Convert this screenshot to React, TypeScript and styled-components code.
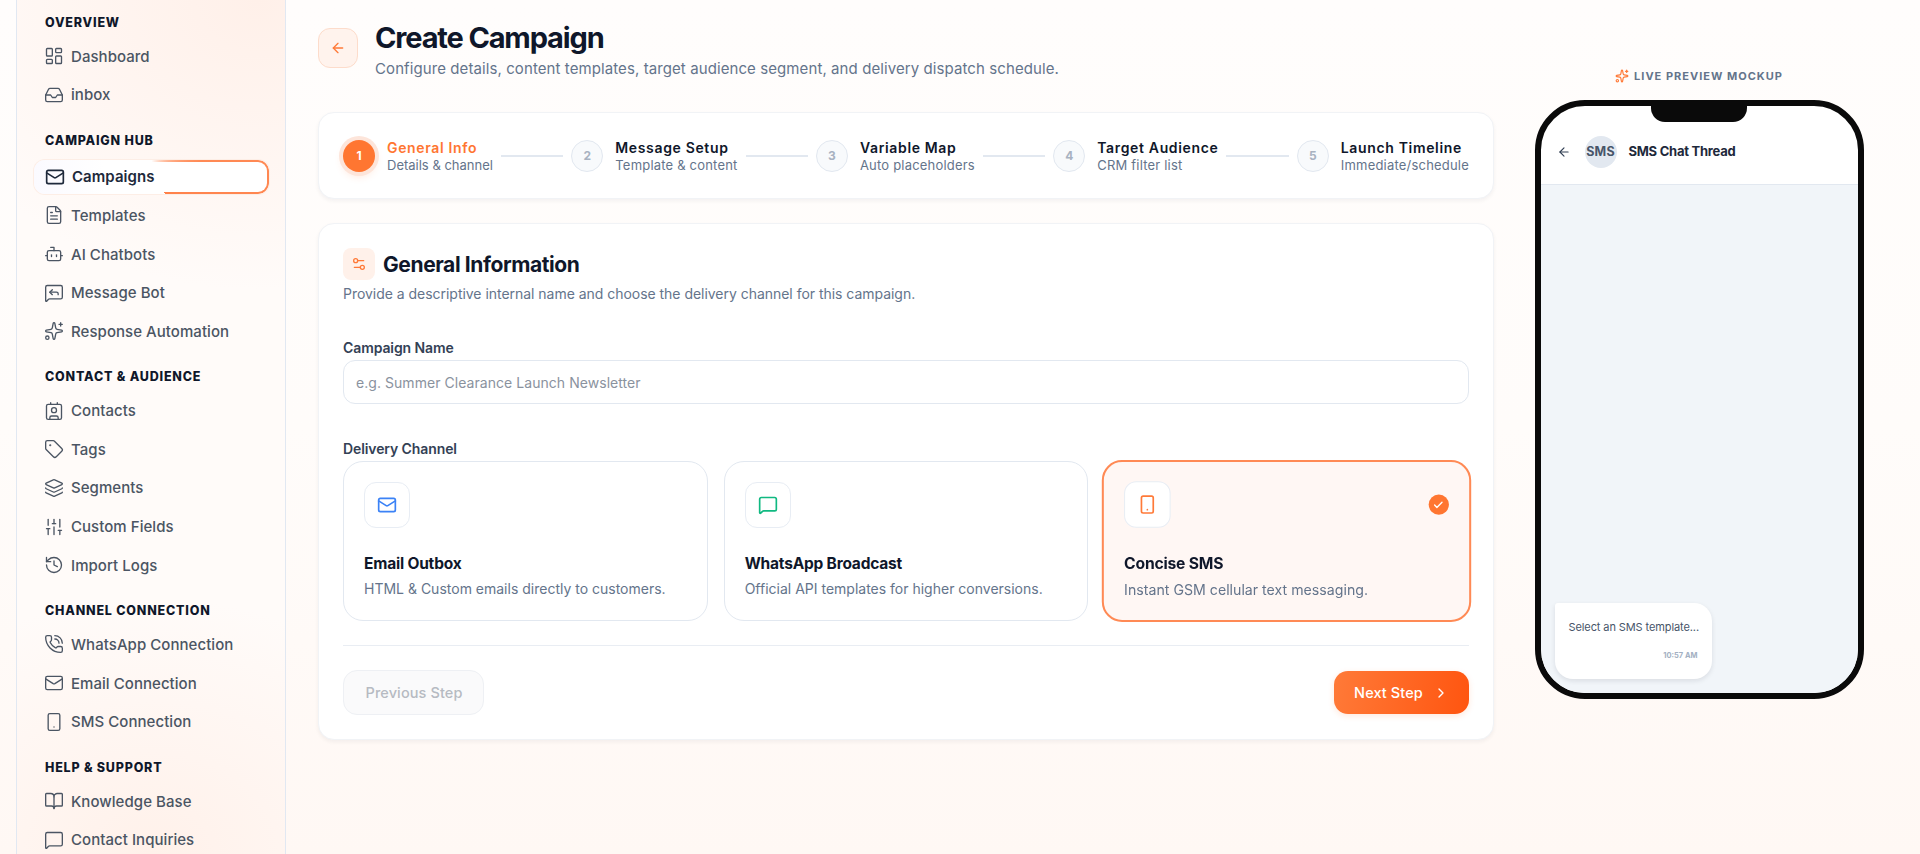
import React from "react";
import styled, { createGlobalStyle } from "styled-components";
import {
  ArrowLeft,
  Bot,
  BookOpen,
  Check,
  ChevronRight,
  Contact,
  FileText,
  History,
  Inbox,
  Layers,
  LayoutDashboard,
  Mail,
  MessageSquare,
  MessageSquareReply,
  PhoneCall,
  Settings2,
  SlidersVertical,
  Smartphone,
  Sparkles,
  Tag,
} from "lucide-react";

const GlobalStyle = createGlobalStyle`
  html, body, #root {
    margin: 0;
    height: 100%;
  }
  body {
    overflow: hidden;
    font-family: Inter, "Noto Sans", sans-serif;
    background: linear-gradient(180deg, #fffdfc 0%, #fffcfa 50%, #fff8f4 100%);
    color: #0f172a;
  }
  * {
    box-sizing: border-box;
  }
`;

const Page = styled.div`
  display: flex;
  height: 854px;
  overflow: hidden;
`;

const Sidebar = styled.aside`
  width: 270px;
  height: 854px;
  margin-left: 16px;
  flex-shrink: 0;
  overflow: hidden;
  padding: 15px 16px 0 17px;
  border-left: 1px solid #e1e8f2;
  border-right: 1px solid #e1e8f2;
  background:
    radial-gradient(ellipse 130% 34% at 90% 0%, #fff0e9 0%, rgba(255, 240, 233, 0) 100%),
    radial-gradient(ellipse 120% 30% at 50% 100%, #fff1ea 0%, rgba(255, 241, 234, 0) 100%),
    #fffbf9;
`;

const NavSection = styled.div`
  margin-bottom: 21px;
`;

const NavLabel = styled.div`
  font-size: 12.5px;
  line-height: 16px;
  font-weight: 800;
  letter-spacing: 0.8px;
  padding-left: 11px;
  margin-bottom: 8.3px;
  color: #0f172a;
`;

const NavList = styled.div`
  display: flex;
  flex-direction: column;
  gap: 4.65px;
`;

const NavItem = styled.div<{ $active?: boolean }>`
  position: relative;
  display: flex;
  align-items: center;
  gap: 7px;
  height: 34px;
  margin-top: ${(p) => (p.$active ? "2.5px" : "0")};
  padding-left: ${(p) => (p.$active ? "11px" : "10px")};
  font-size: 15px;
  font-weight: ${(p) => (p.$active ? 600 : 500)};
  letter-spacing: 0.05px;
  color: ${(p) => (p.$active ? "#1e293b" : "#4b5563")};
  border-radius: 11px;
  background: ${(p) => (p.$active ? "linear-gradient(90deg, #fbfaff, #ffffff 30%)" : "transparent")};
  box-shadow: ${(p) => (p.$active ? "0 0 0 1px #fdeee6" : "none")};

  svg {
    flex-shrink: 0;
  }

  ${(p) =>
    p.$active &&
    `
    &::before {
      content: "";
      position: absolute;
      inset: 0;
      padding: 2px;
      border-radius: 11px;
      background: conic-gradient(from 0deg at 50% 50%, transparent 0deg, #ff8a55 72deg, #ff8048 141deg, transparent 141.5deg);
      -webkit-mask: linear-gradient(#fff 0 0) content-box, linear-gradient(#fff 0 0);
      -webkit-mask-composite: xor;
      mask-composite: exclude;
    }
  `}
`;

const Main = styled.main`
  flex: 1;
  min-width: 0;
  display: grid;
  grid-template-columns: 1176px 1fr;
  column-gap: 32px;
  padding: 20px 48px 0 32px;
  align-items: start;
`;

const FormColumn = styled.div`
  display: flex;
  flex-direction: column;
`;

const Header = styled.header`
  display: flex;
  gap: 17px;
  margin-bottom: 33px;
`;

const BackButton = styled.button`
  width: 40px;
  height: 40px;
  margin-top: 8px;
  display: flex;
  align-items: center;
  justify-content: center;
  padding: 0;
  flex-shrink: 0;
  border-radius: 12px;
  border: 1px solid #fddccb;
  background: #fff3ed;
  color: #ff7a38;
`;

const TitleBlock = styled.div`
  display: flex;
  flex-direction: column;
  gap: 3px;
`;

const PageTitle = styled.h1`
  margin: 0;
  font-size: 29px;
  line-height: 36px;
  font-weight: 700;
  letter-spacing: -1.15px;
  color: #0f172a;
`;

const PageSubtitle = styled.p`
  margin: 0;
  font-size: 15px;
  line-height: 20px;
  letter-spacing: 0.09px;
  color: #64748b;
`;

const Card = styled.section`
  background: #ffffff;
  border: 1px solid #f1f3f6;
  border-radius: 16px;
  box-shadow: 0 2px 4px rgba(15, 23, 42, 0.05);
`;

const StepperCard = styled(Card)`
  display: flex;
  align-items: center;
  gap: 8px;
  height: 87px;
  padding: 0 24px;
  margin-bottom: 24px;
`;

const Step = styled.div`
  display: flex;
  align-items: center;
  gap: 12px;
  flex-shrink: 0;
`;

const StepCircle = styled.div<{ $active?: boolean }>`
  width: 32px;
  height: 32px;
  border-radius: 50%;
  display: flex;
  align-items: center;
  justify-content: center;
  font-size: 12px;
  font-weight: 700;
  color: ${(p) => (p.$active ? "#ffffff" : "#a8b2c1")};
  background: ${(p) => (p.$active ? "#ff7631" : "#f8fafc")};
  border: ${(p) => (p.$active ? "none" : "1px solid #e2e8f0")};
  box-shadow: ${(p) => (p.$active ? "0 0 0 4px #fde5da, 0 4px 8px rgba(255, 118, 49, 0.2)" : "none")};
`;

const StepText = styled.div`
  display: flex;
  flex-direction: column;
`;

const StepTitle = styled.div<{ $active?: boolean }>`
  font-size: 14px;
  line-height: 18px;
  font-weight: 600;
  letter-spacing: 0.65px;
  color: ${(p) => (p.$active ? "#ff7631" : "#0f172a")};
`;

const StepSub = styled.div<{ $active?: boolean }>`
  font-size: 13px;
  line-height: 16px;
  color: #64748b;
  letter-spacing: ${(p) => (p.$active ? "0" : "0.2px")};
`;

const StepLine = styled.div`
  flex: 1;
  height: 2px;
  background: #e2e8f0;
`;

const FormCard = styled(Card)`
  padding: 24px;
`;

const SectionHead = styled.div`
  display: flex;
  align-items: center;
  gap: 8px;
`;

const SectionIcon = styled.div`
  width: 32px;
  height: 32px;
  border-radius: 8px;
  display: flex;
  align-items: center;
  justify-content: center;
  background: #fff1ea;
  color: #ff7a38;
`;

const SectionTitle = styled.h2`
  margin: 0;
  font-size: 21px;
  font-weight: 700;
  letter-spacing: -0.4px;
  color: #0f172a;
`;

const SectionDesc = styled.p`
  margin: 4px 0 34px;
  font-size: 14px;
  line-height: 20px;
  letter-spacing: -0.03px;
  color: #64748b;
`;

const FieldLabel = styled.label`
  display: block;
  font-size: 14px;
  line-height: 20px;
  font-weight: 600;
  letter-spacing: -0.1px;
  margin-bottom: 2px;
  color: #334155;
`;

const NameInput = styled.input`
  display: block;
  width: 100%;
  height: 44px;
  padding: 0 12px;
  margin-bottom: 35px;
  border: 1px solid #e2e8f0;
  border-radius: 12px;
  background: #ffffff;
  font-family: inherit;
  font-size: 14px;
  letter-spacing: 0.05px;
  outline: none;

  &::placeholder {
    color: #8a929e;
  }
`;

const ChannelGrid = styled.div`
  display: grid;
  grid-template-columns: repeat(3, 1fr);
  gap: 16px;
`;

const ChannelCard = styled.div<{ $selected?: boolean }>`
  position: relative;
  height: 160px;
  padding: ${(p) => (p.$selected ? "19px 19px 19px 20px" : "20px")};
  border-radius: 20px;
  border: ${(p) => (p.$selected ? "2px solid #ff8a55" : "1px solid #e2e8f0")};
  background: ${(p) => (p.$selected ? "#fff7f4" : "#ffffff")};
  transform: ${(p) => (p.$selected ? "scale(1.012)" : "none")};
`;

const ChannelIcon = styled.div<{ $color: string }>`
  width: 46px;
  height: 46px;
  border-radius: 12px;
  display: flex;
  align-items: center;
  justify-content: center;
  border: 1px solid #e8edf4;
  background: #ffffff;
  color: ${(p) => p.$color};
`;

const ChannelTitle = styled.div`
  margin-top: 25px;
  font-size: 15.5px;
  line-height: 22px;
  font-weight: 700;
  letter-spacing: -0.2px;
  color: #0f172a;
`;

const ChannelDesc = styled.div`
  margin-top: 4px;
  font-size: 14px;
  line-height: 20px;
  letter-spacing: 0;
  color: #64748b;
`;

const CheckBadge = styled.div`
  position: absolute;
  top: 32px;
  right: 20px;
  width: 20px;
  height: 20px;
  border-radius: 50%;
  display: flex;
  align-items: center;
  justify-content: center;
  background: #ff7631;
  color: #ffffff;
`;

const Divider = styled.hr`
  margin: 24px 0;
  border: none;
  border-top: 1px solid #e9edf3;
`;

const FormActions = styled.div`
  display: flex;
  align-items: center;
  justify-content: space-between;
`;

const PrevButton = styled.button`
  width: 141px;
  height: 45px;
  padding: 0 0 0 1px;
  border-radius: 14px;
  border: 1px solid #eef0f4;
  background: #fafafb;
  font-family: inherit;
  font-size: 14.5px;
  font-weight: 500;
  letter-spacing: 0.1px;
  color: #b6bac2;
`;

const NextButton = styled.button`
  display: flex;
  align-items: center;
  justify-content: center;
  gap: 10px;
  width: 135px;
  height: 43px;
  border: none;
  border-radius: 14px;
  background: linear-gradient(100deg, #ff7a38 0%, #ff5510 100%);
  font-family: inherit;
  font-size: 14.5px;
  font-weight: 500;
  letter-spacing: 0.1px;
  color: #ffffff;
  box-shadow: 0 2px 6px rgba(255, 100, 30, 0.15);
`;

const PreviewColumn = styled.aside`
  display: flex;
  flex-direction: column;
  align-items: center;
  padding-top: 48px;
`;

const PreviewLabel = styled.div`
  display: flex;
  align-items: center;
  gap: 5px;
  height: 16px;
  margin-bottom: 16px;
  font-size: 11px;
  font-weight: 700;
  letter-spacing: 1px;
  color: #64748b;

  svg {
    color: #ff7a38;
  }
`;

const Phone = styled.div`
  position: relative;
  width: 329px;
  height: 599px;
  display: flex;
  flex-direction: column;
  border: 6px solid #0a0a0a;
  border-radius: 50px;
  overflow: hidden;
  background: #ffffff;
`;

const Notch = styled.div`
  position: absolute;
  top: 0;
  left: 50%;
  transform: translateX(-50%);
  width: 96px;
  height: 16px;
  border-radius: 0 0 14px 14px;
  background: #0a0a0a;
`;

const ChatHeader = styled.div`
  height: 79px;
  flex-shrink: 0;
  display: flex;
  align-items: center;
  padding: 13px 0 0 16px;
  gap: 12px;
  border-bottom: 1px solid #e2e8f0;
  color: #334155;
`;

const Avatar = styled.div`
  width: 32px;
  height: 32px;
  margin-left: 2px;
  border-radius: 50%;
  display: flex;
  align-items: center;
  justify-content: center;
  background: #e2e8f0;
  font-size: 12.5px;
  font-weight: 700;
  letter-spacing: 0.2px;
  color: #475569;
`;

const ChatTitle = styled.div`
  padding-bottom: 2px;
  font-size: 13px;
  font-weight: 700;
  letter-spacing: -0.25px;
  color: #1e293b;
`;

const ChatBody = styled.div`
  flex: 1;
  display: flex;
  flex-direction: column;
  justify-content: flex-end;
  align-items: flex-start;
  padding: 0 15px 14px 14px;
  background: #f1f5f9;
`;

const Bubble = styled.div`
  width: 157px;
  padding: 16px 14px 17px 14px;
  border-radius: 3px 18px 18px 18px;
  background: #ffffff;
  box-shadow: 0 2px 5px rgba(15, 23, 42, 0.1);
`;

const BubbleText = styled.div`
  font-size: 11px;
  line-height: 16px;
  letter-spacing: -0.1px;
  white-space: nowrap;
  color: #475569;
`;

const BubbleTime = styled.div`
  margin-top: 15px;
  font-size: 7.5px;
  line-height: 12px;
  font-weight: 700;
  text-align: right;
  color: #a3b0c2;
`;

const navSections = [
  {
    label: "OVERVIEW",
    items: [
      { label: "Dashboard", icon: LayoutDashboard },
      { label: "inbox", icon: Inbox },
    ],
  },
  {
    label: "CAMPAIGN HUB",
    items: [
      { label: "Campaigns", icon: Mail, active: true },
      { label: "Templates", icon: FileText },
      { label: "AI Chatbots", icon: Bot },
      { label: "Message Bot", icon: MessageSquareReply },
      { label: "Response Automation", icon: Sparkles },
    ],
  },
  {
    label: "CONTACT & AUDIENCE",
    items: [
      { label: "Contacts", icon: Contact },
      { label: "Tags", icon: Tag },
      { label: "Segments", icon: Layers },
      { label: "Custom Fields", icon: SlidersVertical },
      { label: "Import Logs", icon: History },
    ],
  },
  {
    label: "CHANNEL CONNECTION",
    items: [
      { label: "WhatsApp Connection", icon: PhoneCall },
      { label: "Email Connection", icon: Mail },
      { label: "SMS Connection", icon: Smartphone },
    ],
  },
  {
    label: "HELP & SUPPORT",
    items: [
      { label: "Knowledge Base", icon: BookOpen },
      { label: "Contact Inquiries", icon: MessageSquare },
    ],
  },
];

const steps = [
  { title: "General Info", sub: "Details & channel" },
  { title: "Message Setup", sub: "Template & content" },
  { title: "Variable Map", sub: "Auto placeholders" },
  { title: "Target Audience", sub: "CRM filter list" },
  { title: "Launch Timeline", sub: "Immediate/schedule" },
];

const channels = [
  { title: "Email Outbox", desc: "HTML & Custom emails directly to customers.", icon: Mail, color: "#3b82f6" },
  { title: "WhatsApp Broadcast", desc: "Official API templates for higher conversions.", icon: MessageSquare, color: "#10b981" },
  { title: "Concise SMS", desc: "Instant GSM cellular text messaging.", icon: Smartphone, color: "#ff7a38", selected: true },
];

export default function App() {
  return (
    <>
      <GlobalStyle />
      <Page>
        <Sidebar>
          {navSections.map((section) => (
            <NavSection key={section.label}>
              <NavLabel>{section.label}</NavLabel>
              <NavList>
                {section.items.map((item) => (
                  <NavItem key={item.label} $active={"active" in item}>
                    <item.icon size={20} strokeWidth={"active" in item ? 2 : 1.6} />
                    {item.label}
                  </NavItem>
                ))}
              </NavList>
            </NavSection>
          ))}
        </Sidebar>

        <Main>
          <FormColumn>
            <Header>
              <BackButton aria-label="Back">
                <ArrowLeft size={16} />
              </BackButton>
              <TitleBlock>
                <PageTitle>Create Campaign</PageTitle>
                <PageSubtitle>
                  Configure details, content templates, target audience segment, and delivery dispatch schedule.
                </PageSubtitle>
              </TitleBlock>
            </Header>

            <StepperCard>
              {steps.map((step, i) => (
                <React.Fragment key={step.title}>
                  {i > 0 && <StepLine />}
                  <Step>
                    <StepCircle $active={i === 0}>{i + 1}</StepCircle>
                    <StepText>
                      <StepTitle $active={i === 0}>{step.title}</StepTitle>
                      <StepSub $active={i === 0}>{step.sub}</StepSub>
                    </StepText>
                  </Step>
                </React.Fragment>
              ))}
            </StepperCard>

            <FormCard>
              <SectionHead>
                <SectionIcon>
                  <Settings2 size={16} />
                </SectionIcon>
                <SectionTitle>General Information</SectionTitle>
              </SectionHead>
              <SectionDesc>Provide a descriptive internal name and choose the delivery channel for this campaign.</SectionDesc>

              <FieldLabel>Campaign Name</FieldLabel>
              <NameInput placeholder="e.g. Summer Clearance Launch Newsletter" />

              <FieldLabel>Delivery Channel</FieldLabel>
              <ChannelGrid>
                {channels.map((c) => (
                  <ChannelCard key={c.title} $selected={c.selected}>
                    <ChannelIcon $color={c.color}>
                      <c.icon size={20} />
                    </ChannelIcon>
                    <ChannelTitle>{c.title}</ChannelTitle>
                    <ChannelDesc>{c.desc}</ChannelDesc>
                    {c.selected && (
                      <CheckBadge>
                        <Check size={11} strokeWidth={3} />
                      </CheckBadge>
                    )}
                  </ChannelCard>
                ))}
              </ChannelGrid>

              <Divider />

              <FormActions>
                <PrevButton disabled>Previous Step</PrevButton>
                <NextButton>
                  Next Step
                  <ChevronRight size={16} />
                </NextButton>
              </FormActions>
            </FormCard>
          </FormColumn>

          <PreviewColumn>
            <PreviewLabel>
              <Sparkles size={14} />
              LIVE PREVIEW MOCKUP
            </PreviewLabel>
            <Phone>
              <Notch />
              <ChatHeader>
                <ArrowLeft size={14} />
                <Avatar>SMS</Avatar>
                <ChatTitle>SMS Chat Thread</ChatTitle>
              </ChatHeader>
              <ChatBody>
                <Bubble>
                  <BubbleText>Select an SMS template...</BubbleText>
                  <BubbleTime>10:57 AM</BubbleTime>
                </Bubble>
              </ChatBody>
            </Phone>
          </PreviewColumn>
        </Main>
      </Page>
    </>
  );
}
